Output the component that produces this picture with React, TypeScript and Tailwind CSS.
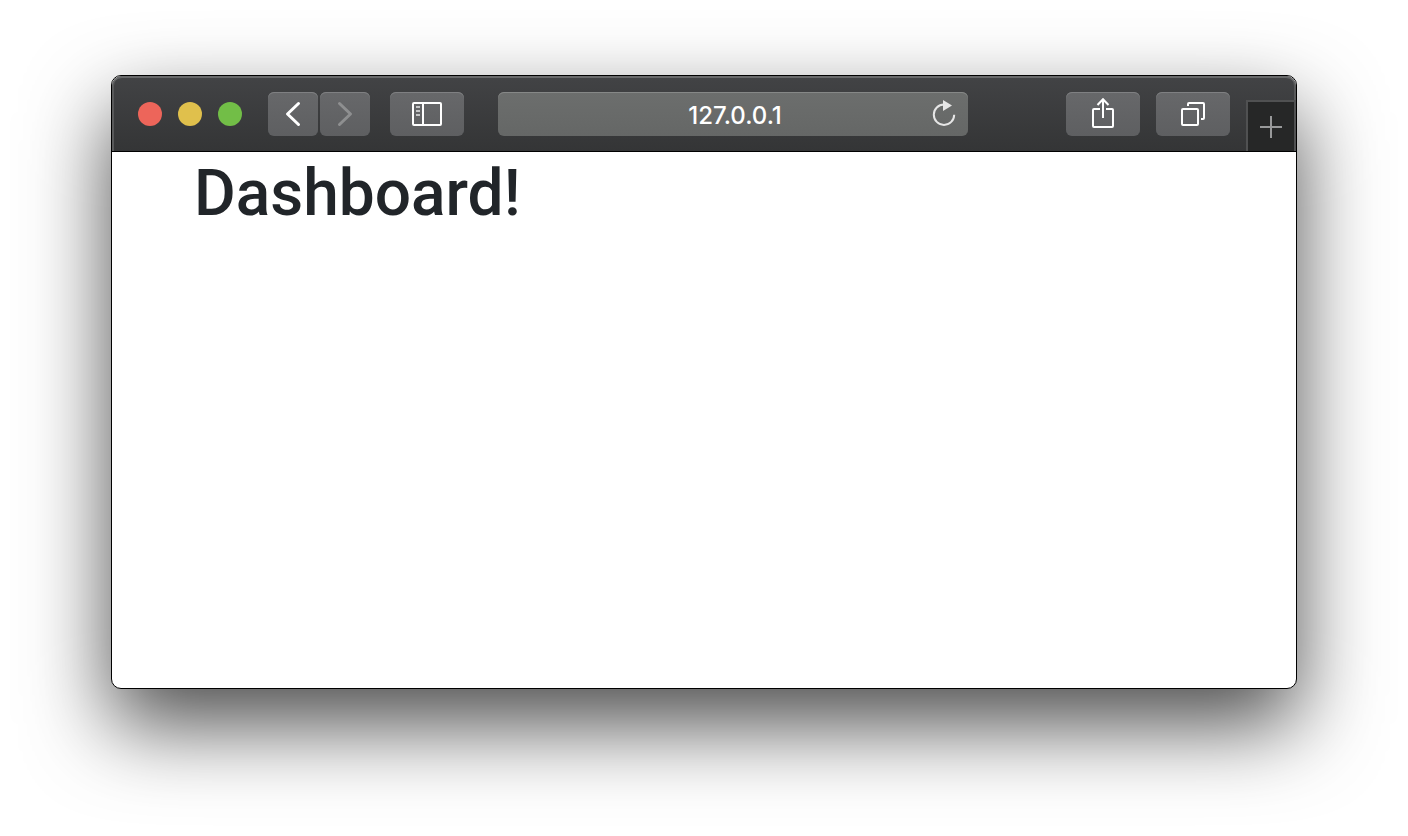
import type { ReactNode } from "react";

const controlFace =
  "flex h-11 items-center justify-center rounded-md bg-linear-to-b from-[#67686a] to-[#5e5f61] shadow-[inset_0_1px_0_#7f8082]";

function ToolbarButton({
  label,
  width,
  disabled,
  children,
}: {
  label: string;
  width: string;
  disabled?: boolean;
  children: ReactNode;
}) {
  return (
    <button
      type="button"
      aria-label={label}
      disabled={disabled}
      className={`${controlFace} ${width} shrink-0 text-white`}
    >
      {children}
    </button>
  );
}

function TrafficLights() {
  return (
    <div className="flex shrink-0 gap-4">
      <button type="button" aria-label="Close" className="size-6 rounded-full bg-[#ed655a]" />
      <button type="button" aria-label="Minimize" className="size-6 rounded-full bg-[#e0c04c]" />
      <button type="button" aria-label="Zoom" className="size-6 rounded-full bg-[#72be47]" />
    </div>
  );
}

function BackIcon() {
  return (
    <svg width="50" height="44" viewBox="0 0 50 44" fill="none" stroke="currentColor" strokeWidth="3" strokeLinecap="round" strokeLinejoin="round">
      <path d="M30.500 11.500 19.500 22l11 10.500" />
    </svg>
  );
}

function ForwardIcon() {
  return (
    <svg width="50" height="44" viewBox="0 0 50 44" fill="none" stroke="#8e8f90" strokeWidth="3" strokeLinecap="round" strokeLinejoin="round">
      <path d="M19.500 11.500 30.500 22l-11 10.500" />
    </svg>
  );
}

function SidebarIcon() {
  return (
    <svg width="74" height="44" viewBox="0 0 74 44" fill="none" stroke="currentColor" strokeWidth="2">
      <rect x="23" y="11" width="28" height="22" rx="1" />
      <path d="M33 11v22" />
      <path d="M26 15h4M26 19h4M26 23h4" stroke="#c4c5c6" />
    </svg>
  );
}

function ReloadIcon() {
  return (
    <svg width="24" height="28" viewBox="0 0 24 28" fill="none">
      <path d="M12 5.500a10.200 10.200 0 1 0 10.200 10.200" stroke="#e6e6e6" strokeWidth="2" />
      <path d="M11 1v11l9-5.500z" fill="#e6e6e6" />
    </svg>
  );
}

function ShareIcon() {
  return (
    <svg width="74" height="44" viewBox="0 0 74 44" fill="none" stroke="currentColor" strokeWidth="2">
      <path d="M34 17h-6q-1 0-1 1v16q0 1 1 1h18q1 0 1-1V18q0-1-1-1h-6" />
      <path d="M37 26V7.500" />
      <path d="M31.500 13 37 7.200 42.500 13" />
    </svg>
  );
}

function TabsIcon() {
  return (
    <svg width="74" height="44" viewBox="0 0 74 44" fill="none" stroke="currentColor" strokeWidth="2">
      <rect x="26" y="17" width="16" height="16" rx="1" />
      <path d="M32 14v-2q0-1 1-1h14q1 0 1 1v14q0 1-1 1h-2" />
    </svg>
  );
}

function Toolbar() {
  return (
    <header className="flex h-[76px] items-center rounded-t-[10px] border-b border-black bg-linear-to-b from-[#424345] to-[#343536] pl-[26px] shadow-[inset_0_2px_0_#68696a,inset_2px_0_0_#58595a,inset_-2px_0_0_#58595a]">
      <TrafficLights />
      <nav aria-label="History" className="ml-[26px] flex shrink-0 gap-0.5">
        <ToolbarButton label="Back" width="w-[50px]">
          <BackIcon />
        </ToolbarButton>
        <ToolbarButton label="Forward" width="w-[50px]" disabled>
          <ForwardIcon />
        </ToolbarButton>
      </nav>
      <div className="ml-5 flex shrink-0">
        <ToolbarButton label="Show sidebar" width="w-[74px]">
          <SidebarIcon />
        </ToolbarButton>
      </div>
      <div className="mr-[98px] ml-[34px] flex h-11 min-w-0 flex-1 items-center rounded-md bg-linear-to-b from-[#6c6e6d] to-[#656766] pr-3 pl-10 shadow-[inset_0_1px_0_#868887]">
        <input
          type="text"
          aria-label="Address"
          defaultValue="127.0.0.1"
          className="h-9 min-w-0 flex-1 bg-transparent pt-1 text-center font-['Inter','Liberation_Sans',sans-serif] text-2xl font-medium text-white outline-none"
        />
        <button type="button" aria-label="Reload" className="shrink-0 pb-0.5">
          <ReloadIcon />
        </button>
      </div>
      <div className="flex shrink-0 gap-4">
        <ToolbarButton label="Share" width="w-[74px]">
          <ShareIcon />
        </ToolbarButton>
        <ToolbarButton label="Show all tabs" width="w-[74px]">
          <TabsIcon />
        </ToolbarButton>
      </div>
      <button
        type="button"
        aria-label="New tab"
        className="ml-4 flex h-[51px] w-[50px] shrink-0 items-center justify-center self-end border-t-2 border-r-2 border-l-2 border-[#505152] bg-[#262727]"
      >
        <svg width="22" height="22" viewBox="0 0 22 22" stroke="#98999a" strokeWidth="2">
          <path d="M11 0v22M0 11h22" />
        </svg>
      </button>
    </header>
  );
}

export default function App() {
  return (
    <div className="flex min-h-screen flex-col bg-white px-[111px] pt-[75px] pb-[147px]">
      <div className="flex flex-1 flex-col overflow-hidden rounded-[10px] border border-black bg-white shadow-[0_36px_84px_rgba(0,0,0,0.7)]">
        <Toolbar />
        <main className="flex-1 px-[82px] pt-1">
          <h1 className="font-['Roboto','Liberation_Sans',sans-serif] text-[64px] leading-[76px] font-medium text-[#212529]">
            Dashboard!
          </h1>
        </main>
      </div>
    </div>
  );
}
